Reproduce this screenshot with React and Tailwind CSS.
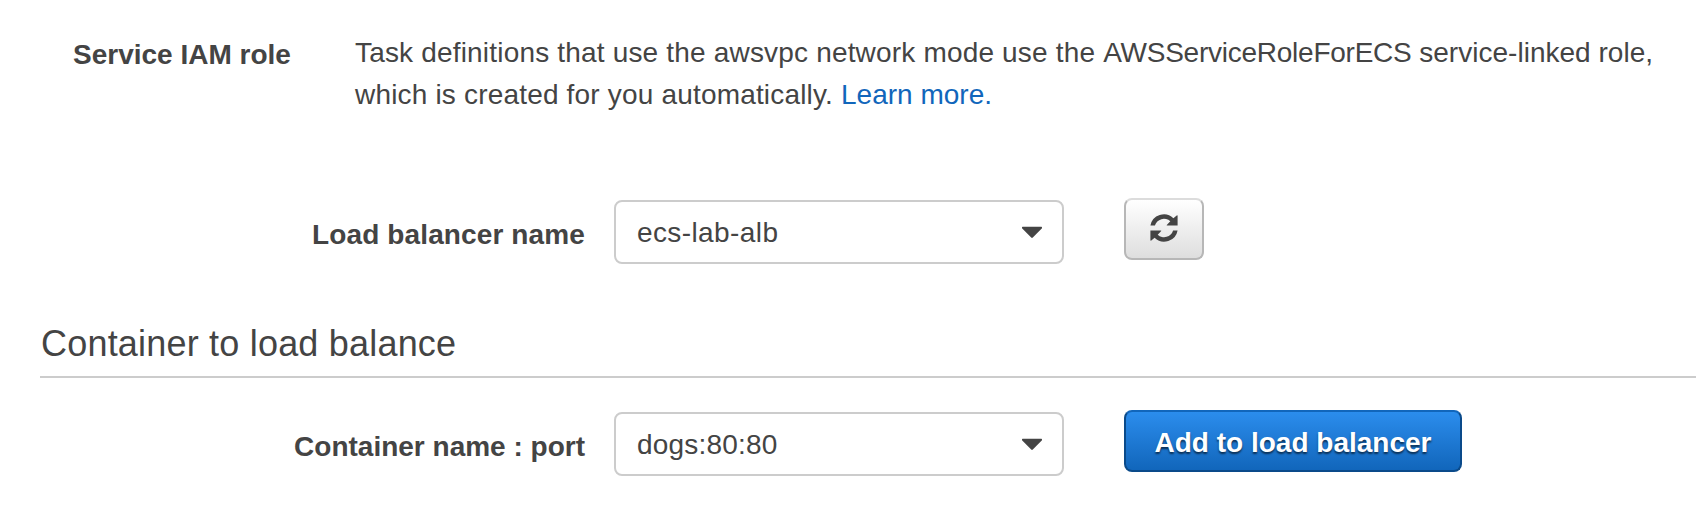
function Caret() {
  return (
    <svg width="20" height="12" viewBox="0 0 20 12" className="shrink-0" fill="#444">
      <path d="M.6 .8h18.800q.6 0 .6.600v.9l-9.200 9.300q-.8.700-1.600 0L0 2.300v-.9q0-.6.6-.6z" />
    </svg>
  );
}

function RefreshIcon() {
  const arrow =
    "M.4 11.600A13.700 13.700 0 0 1 23.400 4.200L26.700 1.500q.9-.6.900.5V11.600H17.400q-1.200 0-.4-.9L20.300 7.300A9.400 9.400 0 0 0 4.900 11.600Z";
  return (
    <svg width="28" height="28" viewBox="0 0 28 28" className="-mt-0.5" fill="#444">
      <path d={arrow} />
      <path d={arrow} transform="rotate(180 14 14)" />
    </svg>
  );
}

function Select({ children }) {
  return (
    <button className="flex h-16 w-[450px] items-center justify-between rounded-lg border-2 border-[#ccc] bg-white pr-5 pl-[21px]">
      {children}
      <Caret />
    </button>
  );
}

function FormRow({ label, value, children }) {
  return (
    <div className="flex items-start">
      <label className="w-[585px] pt-4 text-right font-bold">{label}</label>
      <div className="ml-[29px] pt-0.5">
        <Select>{value}</Select>
      </div>
      <div className="ml-[60px]">{children}</div>
    </div>
  );
}

export default function App() {
  return (
    <main className="h-[520px] w-[1696px] overflow-hidden bg-white font-['Liberation_Sans',Arial,sans-serif] text-[28px] leading-[42px] text-[#444]">
      <section className="flex h-[198px] pt-8 pl-[73px]">
        <h3 className="w-[282px] pt-0.5 font-bold">Service IAM role</h3>
        <p className="tracking-[0.18px] whitespace-nowrap">
          Task definitions that use the awsvpc network mode use the{" "}
          <span className="tracking-[-0.25px]">AWSServiceRoleForECS</span>
          <span className="tracking-[0.02px]"> service-linked role,</span>
          <br />
          which is created for you automatically.{" "}
          <a className="tracking-normal text-[#1166bb]">Learn more.</a>
        </p>
      </section>
      <FormRow
        label={<span className="tracking-[0.12px]">Load balancer name</span>}
        value={<span className="pt-0.5 tracking-[0.4px]">ecs-lab-alb</span>}
      >
        <button className="flex h-[62px] w-20 items-center justify-center rounded-lg border-2 border-[#b7b7b7] border-t-[#dcdcdc] bg-linear-to-b from-white to-[#dedede]">
          <RefreshIcon />
        </button>
      </FormRow>
      <h2 className="mt-[54px] ml-10 flex h-[60px] items-center border-b-2 border-[#ccc] pb-1.5 pl-px text-[36px] tracking-[0.2px]">
        Container to load balance
      </h2>
      <div className="pt-8">
        <FormRow
          label="Container name : port"
          value={<span className="pt-0.5 tracking-[0.2px]">dogs:80:80</span>}
        >
          <button className="flex h-[62px] w-[338px] items-center justify-center rounded-lg border-2 border-[#0a4a8a] border-t-[#1166bb] bg-linear-to-b from-[#2b8ded] to-[#1166bb] pt-[3px] font-bold text-white text-shadow-[0_2px_2px_#00000099]">
            Add to load balancer
          </button>
        </FormRow>
      </div>
    </main>
  );
}
